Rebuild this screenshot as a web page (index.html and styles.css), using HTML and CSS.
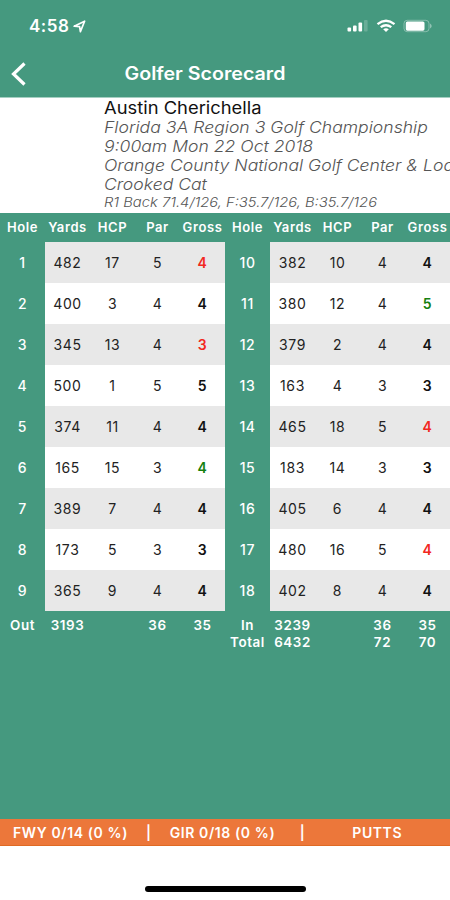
FILE: index.html
```html
<!DOCTYPE html>
<html lang="en">
<head>
    <meta charset="UTF-8">
    <meta name="viewport" content="width=device-width, initial-scale=1.0">
    <title>Golfer Scorecard</title>
    <link rel="stylesheet" href="styles.css">
</head>
<body>
    <div class="status-bar">
        <span class="time">4:58</span>
        <svg class="location" width="13" height="13" viewBox="0 0 13 13"><path d="M1.2 6.2 11.6 1.2 7.4 11.6 6.6 6.6Z" fill="none" stroke="#fff" stroke-width="1.7" stroke-linejoin="round"/></svg>
        <div class="indicators">
            <svg width="22" height="14" viewBox="0 0 22 14">
                <rect x="0.5" y="8.5" width="3.6" height="4" rx="1" fill="#fff"/>
                <rect x="6" y="6.5" width="3.6" height="6" rx="1" fill="#fff"/>
                <rect x="11.5" y="3.5" width="3.6" height="9" rx="1" fill="#fff"/>
                <rect x="17" y="1" width="3.6" height="11.5" rx="1" fill="#fff" opacity="0.2"/>
            </svg>
            <svg width="20" height="14" viewBox="0 0 20 14" fill="none" stroke="#fff" stroke-width="2.3">
                <path d="M1.5 5.1Q10-1.6 18.5 5.1"/>
                <path d="M4.7 8.2Q10 4.2 15.3 8.2"/>
                <path d="M7.2 10.2Q10 8.2 12.8 10.2L10 13Z" fill="#fff" stroke="none"/>
            </svg>
            <svg width="31" height="14" viewBox="0 0 31 14">
                <rect x="1" y="1.3" width="25" height="11.4" rx="3.2" fill="none" stroke="#fff" opacity="0.35"/>
                <rect x="2.8" y="2.5" width="18.7" height="9.2" rx="1.6" fill="#fff"/>
                <path d="M27.2 4.5Q30 7 27.2 9.5Z" fill="#fff" opacity="0.5"/>
            </svg>
        </div>
    </div>

    <div class="nav-bar">
        <svg class="back" width="16" height="26" viewBox="0 0 16 26"><path d="M13.5 2.5 2.5 13 13.5 23.5" fill="none" stroke="#fff" stroke-width="3.2"/></svg>
        <h1>Golfer Scorecard</h1>
    </div>

    <div class="info">
        <div class="golfer">Austin Cherichella</div>
        <div class="line">Florida 3A Region 3 Golf Championship</div>
        <div class="line">9:00am Mon 22 Oct 2018</div>
        <div class="line">Orange County National Golf Center &amp; Lodge</div>
        <div class="line">Crooked Cat</div>
        <div class="tees">R1 Back 71.4/126, F:35.7/126, B:35.7/126</div>
    </div>

    <div class="scorecard">
        <table>
            <thead>
                <tr><th>Hole</th><th>Yards</th><th>HCP</th><th>Par</th><th>Gross</th></tr>
            </thead>
            <tbody>
                <tr><th>1</th><td>482</td><td>17</td><td>5</td><td class="gross under">4</td></tr>
                <tr><th>2</th><td>400</td><td>3</td><td>4</td><td class="gross">4</td></tr>
                <tr><th>3</th><td>345</td><td>13</td><td>4</td><td class="gross under">3</td></tr>
                <tr><th>4</th><td>500</td><td>1</td><td>5</td><td class="gross">5</td></tr>
                <tr><th>5</th><td>374</td><td>11</td><td>4</td><td class="gross">4</td></tr>
                <tr><th>6</th><td>165</td><td>15</td><td>3</td><td class="gross over">4</td></tr>
                <tr><th>7</th><td>389</td><td>7</td><td>4</td><td class="gross">4</td></tr>
                <tr><th>8</th><td>173</td><td>5</td><td>3</td><td class="gross">3</td></tr>
                <tr><th>9</th><td>365</td><td>9</td><td>4</td><td class="gross">4</td></tr>
            </tbody>
            <tfoot>
                <tr><td>Out</td><td>3193</td><td></td><td>36</td><td>35</td></tr>
            </tfoot>
        </table>
        <table>
            <thead>
                <tr><th>Hole</th><th>Yards</th><th>HCP</th><th>Par</th><th>Gross</th></tr>
            </thead>
            <tbody>
                <tr><th>10</th><td>382</td><td>10</td><td>4</td><td class="gross">4</td></tr>
                <tr><th>11</th><td>380</td><td>12</td><td>4</td><td class="gross over">5</td></tr>
                <tr><th>12</th><td>379</td><td>2</td><td>4</td><td class="gross">4</td></tr>
                <tr><th>13</th><td>163</td><td>4</td><td>3</td><td class="gross">3</td></tr>
                <tr><th>14</th><td>465</td><td>18</td><td>5</td><td class="gross under">4</td></tr>
                <tr><th>15</th><td>183</td><td>14</td><td>3</td><td class="gross">3</td></tr>
                <tr><th>16</th><td>405</td><td>6</td><td>4</td><td class="gross">4</td></tr>
                <tr><th>17</th><td>480</td><td>16</td><td>5</td><td class="gross under">4</td></tr>
                <tr><th>18</th><td>402</td><td>8</td><td>4</td><td class="gross">4</td></tr>
            </tbody>
            <tfoot>
                <tr><td>In</td><td>3239</td><td></td><td>36</td><td>35</td></tr>
                <tr><td>Total</td><td>6432</td><td></td><td>72</td><td>70</td></tr>
            </tfoot>
        </table>
    </div>

    <div class="stats">
        <span class="fwy">FWY 0/14 (0 %)</span>
        <span>|</span>
        <span class="gir">GIR 0/18 (0 %)</span>
        <span>|</span>
        <span class="putts">PUTTS</span>
    </div>

    <div class="home-area">
        <div class="home-indicator"></div>
    </div>
</body>
</html>
```
FILE: styles.css
```css
* {
    box-sizing: border-box;
}
body {
    margin: 0;
    height: 900px;
    display: flex;
    flex-direction: column;
    overflow: hidden;
    font-family: Inter, "Liberation Sans", sans-serif;
    background: #45997f;
    color: #fff;
}
.status-bar {
    display: flex;
    align-items: center;
    height: 52px;
    padding: 0 16px 0 29px;
}
.time {
    font-size: 17px;
    font-weight: 600;
    letter-spacing: 0.5px;
}
.location {
    margin-left: 4px;
}
.indicators {
    display: flex;
    gap: 7px;
    margin-left: auto;
}
.nav-bar {
    display: grid;
    grid-template-columns: 40px 330px;
    align-items: center;
    height: 45px;
}
.nav-bar h1 {
    margin: 0;
    font-size: 18px;
    font-weight: 600;
    text-align: center;
    line-height: 24px;
    padding-bottom: 2px;
    transform: scaleX(1.09);
}
.back {
    margin-left: 11px;
    margin-bottom: 2px;
}
.info {
    height: 116px;
    padding-left: 104px;
    border-top: 1px solid #a5cfc2;
    background: #fff;
    color: #555;
    white-space: nowrap;
    overflow: hidden;
}
.golfer, .line, .tees {
    transform: scaleX(1.1);
    transform-origin: left;
}
.golfer {
    height: 20px;
    line-height: 20px;
    font-size: 16.7px;
    color: #111;
}
.line {
    height: 19px;
    line-height: 19px;
    font-size: 16px;
    font-style: italic;
    font-weight: 300;
}
.tees {
    height: 17px;
    line-height: 17px;
    font-size: 13.4px;
    font-style: italic;
    font-weight: 300;
}
.scorecard {
    flex: 1;
    display: flex;
    align-items: flex-start;
}
table {
    width: 225px;
    table-layout: fixed;
    border-collapse: collapse;
}
th, td {
    padding: 0;
    text-align: center;
    white-space: nowrap;
    font-size: 13px;
    letter-spacing: 0.6px;
}
thead th {
    height: 29px;
    padding-bottom: 2px;
    font-weight: 600;
}
tbody th, tbody td {
    height: 41px;
}
tbody th {
    font-size: 14px;
    font-weight: 500;
}
tbody td {
    font-size: 14px;
    background: #fff;
    color: #222;
}
tbody tr:nth-child(odd) td {
    background: #e8e8e8;
}
tbody .gross {
    font-weight: 600;
    color: #111;
}
tbody .under {
    color: #f2281f;
}
tbody .over {
    color: #15800f;
}
tfoot td {
    height: 18px;
    font-size: 13.4px;
    font-weight: 600;
}
tfoot tr:first-child td {
    height: 22px;
    padding-top: 5px;
}
.stats {
    display: flex;
    align-items: center;
    height: 27px;
    padding-left: 13px;
    border-bottom: 1px solid #df6a24;
    background: #ec773a;
    font-size: 14px;
    font-weight: 600;
    letter-spacing: 0.6px;
    white-space: pre;
}
.fwy {
    width: 133px;
}
.gir {
    width: 130px;
    margin-left: 18px;
}
.putts {
    margin-left: 47px;
}
.home-area {
    display: flex;
    justify-content: center;
    height: 54px;
    padding-top: 40px;
    background: #fff;
}
.home-indicator {
    width: 161px;
    height: 6px;
    border-radius: 3px;
    background: #000;
}
```
